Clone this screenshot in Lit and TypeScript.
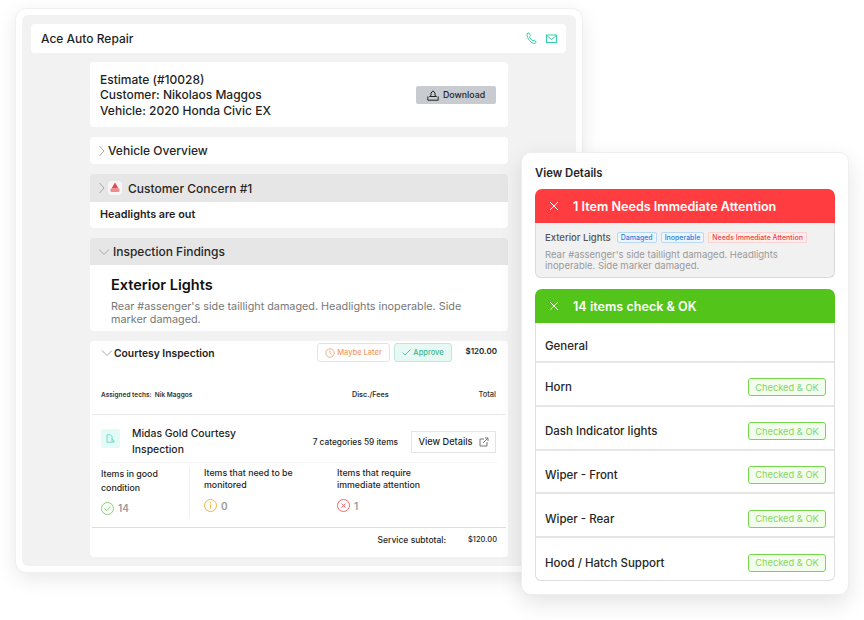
import { LitElement, html, css } from "lit";
import { customElement } from "lit/decorators.js";

const chevR = html`<svg class="chev" width="8" height="12" viewBox="0 0 8 12" fill="none" stroke="#a8a8a8" stroke-width="1"><path d="M1.500 1l4.500 5-4.500 5"/></svg>`;
const chevD = html`<svg class="chevd" width="12" height="8" viewBox="0 0 12 8" fill="none" stroke="#a8a8a8" stroke-width="1"><path d="M1 1.500l5 5 5-5"/></svg>`;
const xIcon = html`<svg class="x" width="10" height="10" viewBox="0 0 10 10" fill="none" stroke="#fff" stroke-width="1"><path d="M1 1l8 8M9 1l-8 8"/></svg>`;

const rows = ["Horn", "Dash Indicator lights", "Wiper - Front", "Wiper - Rear", "Hood / Hatch Support"];

@customElement("app-root")
export class AppRoot extends LitElement {
  static styles = css`
    :host { display: block; width: 864px; height: 620px; position: relative; overflow: hidden; background: #fff;
      font-family: Inter, "Noto Sans", sans-serif; color: #1f1f1f; }
    * { box-sizing: border-box; }
    .stage { padding: 8px 0 0 15px; }
    .outer { width: 568px; height: 565px; padding: 6px; background: #fff; border-radius: 11px;
      border: 1px solid #f0f0f0; box-shadow: 0 6px 20px rgba(0,0,0,.09); }
    .inner { height: 100%; background: #f2f2f2; border-radius: 6px; padding: 9px 10px 0 9px; }
    .top { height: 29px; background: #fff; border-radius: 4px; display: flex; align-items: center; justify-content: space-between;
      padding: 0 9px 0 10px; font-size: 12px; font-weight: 500; }
    .top .ic { display: flex; gap: 8px; align-items: center; }
    .col { width: 418px; margin: 9px 0 0 59px; display: flex; flex-direction: column; gap: 10px; }
    .est { height: 65px; background: #fff; border-radius: 4px; display: flex; align-items: center; justify-content: space-between;
      padding: 1px 12px 0 10px; font-size: 12px; line-height: 15.5px; font-weight: 500; }
    .dl { width: 80px; height: 18px; background: #c8ccd0; border-radius: 2px; display: flex; align-items: center; justify-content: center;
      gap: 4px; font-size: 8.800px; font-weight: 500; }
    .acc { height: 27px; background: #fff; border-radius: 4px; display: flex; align-items: center; font-size: 12px; font-weight: 500; padding: 0 0 0 8px; color: #262626; }
    .acc.gray { background: #e6e6e6; border-radius: 4px 4px 0 0; height: 28px; }
    .acc.short { height: 27px; }
    .acc .chev { margin-right: 2px; }
    .acc .chevd { margin-right: 3px; }
    .badge { width: 14px; height: 14px; margin-right: 6px; }
    .group { display: flex; flex-direction: column; }
    .body1 { height: 26px; background: #fff; border-radius: 0 0 4px 4px; padding: 6px 10px; font-size: 10.800px; font-weight: 600; line-height: 14px; }
    .body2 { height: 66px; background: #fff; border-radius: 0 0 4px 4px; padding: 11px 21px; }
    .body2 h3 { margin: 0; font-size: 14.500px; line-height: 18px; font-weight: 600; color: #111; }
    .body2 p { margin: 6px 0 0; font-size: 10.800px; line-height: 13px; color: #777; }
    .court { height: 216px; background: #fff; border-radius: 4px; display: flex; flex-direction: column; }
    .c-head { height: 34px; display: flex; align-items: flex-start; padding: 2px 11px 0 11px; }
    .c-title { display: flex; align-items: center; gap: 1px; font-size: 10.300px; font-weight: 600; margin-top: 4px; flex: 1; }
    .pill { height: 19px; border-radius: 3px; display: flex; align-items: center; justify-content: center; font-size: 7.500px; font-weight: 500; gap: 2px; }
    .later { width: 73px; border: 1px solid #f6ddd0; color: #ef9b6c; margin-right: 4px; }
    .appr { width: 58px; border: 1px solid #bce8dc; background: #e8f8f4; color: #3fb893; }
    .price { width: 45px; text-align: right; font-size: 8px; font-weight: 600; line-height: 16px; }
    .techs { height: 39px; display: flex; align-items: center; font-size: 6.500px; font-weight: 600; padding: 0 12px 0 11px; color: #333; }
    .techs .a { width: 251px; }
    .techs .b { font-size: 7.200px; }
    .techs .c { margin-left: auto; font-size: 7.500px; font-weight: 500; }
    .svc { margin: 0 3px 0 2px; border-top: 1px solid #e8e8e8; height: 48px; display: flex; align-items: center; padding: 6px 9px 0 9px; }
    .doc { width: 19px; height: 19px; background: #e3faf7; border-radius: 2px; display: flex; align-items: center; justify-content: center; margin: -6px 12px 0 0; }
    .svc .name { width: 130px; font-size: 10.400px; line-height: 16px; font-weight: 500; }
    .svc .cnt { margin-left: auto; margin-right: 13px; font-size: 8.300px; font-weight: 500; }
    .vd { width: 85px; height: 22px; border: 1px solid #e4e4e4; display: flex; align-items: center; justify-content: center; gap: 6px; font-size: 9.200px; font-weight: 500; }
    .stats { margin: 0 0 0 11px; border-top: 1px solid #f5f5f5; height: 65px; display: flex; width: 396px; }
    .st { font-size: 8.800px; font-weight: 500; position: relative; }
    .st .v { display: flex; align-items: center; gap: 4px; color: #9a9a9a; font-size: 10px; font-weight: 600; }
    .s1 { width: 89px; border-right: 1px solid #f0f0f0; height: 50px; margin-top: 4px; line-height: 14px; }
    .s1 .v { margin-top: 6px; }
    .s2 { width: 147px; padding: 4px 0 0 14px; line-height: 12px; }
    .s2 .v { margin-top: 8px; }
    .s3 { padding-top: 4px; line-height: 12px; }
    .s3 .v { margin-top: 8px; }
    .sub { margin: 0 2px; border-top: 1px solid #dedede; display: flex; justify-content: flex-end; align-items: center; height: 24px; padding: 0 9px 0 0; font-size: 8.500px; font-weight: 500; }
    .sub span:last-child { width: 51px; text-align: right; font-size: 7.500px; }
    .panel { position: absolute; left: 521px; top: 152px; width: 328px; height: 443px; background: #fff; border-radius: 10px; border: 1px solid #efefef;
      box-shadow: 0 8px 22px rgba(0,0,0,.11); padding: 13px 13px 0 13px; }
    .panel h4 { margin: 0; font-size: 11.300px; font-weight: 600; line-height: 14px; color: #262626; height: 23px; }
    .bar { height: 34px; display: flex; align-items: center; color: #fff; font-size: 12.600px; font-weight: 600; padding-left: 14px; gap: 14px; border-radius: 7px 7px 0 0; }
    .red { background: #ff3d41; }
    .green { background: #52c41a; }
    .box { background: #f1f1f1; border: 1px solid #d9d9d9; border-top: 0; height: 55px; border-radius: 0 0 6px 6px; padding: 8px 9px; margin-bottom: 11px; }
    .tags { display: flex; align-items: center; font-size: 9.500px; font-weight: 500; color: #555; height: 12px; }
    .tag { font-size: 7px; height: 11px; display: flex; align-items: center; padding: 0 3px; margin-left: 4px; border: 1px solid #b9d8f6; border-radius: 2px; color: #2f7fdc; background: #eef6fd; }
    .tags .first { margin-left: 6px; }
    .tag.danger { border: 1px solid #fcd3d3; color: #ef4444; background: #fdeeee; border-radius: 0; }
    .box p { margin: 6px 0 0; font-size: 9.500px; line-height: 11px; color: #999; }
    .list { border: 1px solid #dfdfdf; border-top: 0; border-radius: 0 0 6px 6px; }
    .row { height: 43.800px; display: flex; align-items: center; justify-content: space-between; padding: 7px 8px 0 9px; font-size: 11.500px; font-weight: 500; color: #262626; border-top: 2px solid #e6e6e6; }
    .row.gen { height: 38px; border-top: 0; padding-top: 8px; }
    .ok { width: 78px; height: 18px; border: 1px solid #74d84a; border-radius: 3px; background: #f3fdee; color: #85d662; font-size: 9.300px; font-weight: 400; display: flex; align-items: center; justify-content: center; }
  `;

  render() {
    return html`
      <div class="stage">
        <div class="outer">
          <div class="inner">
            <div class="top">
              <span>Ace Auto Repair</span>
              <span class="ic">
                <svg width="12" height="13" viewBox="0 0 12 13" fill="none" stroke="#35d0a8" stroke-width="1"><path d="M1 1.800L2.800.8l1.700 2.600-1 1c.5 1.800 1.900 3.700 3.400 4.500l1.300-.8 2.100 2.100-1.500 1.300C5.500 12 .8 6.500 1 1.800z"/></svg>
                <svg width="11" height="10" viewBox="0 0 11 10" fill="none" stroke="#35d0a8" stroke-width="1"><rect x=".5" y="1" width="10" height="7.500"/><path d="M.5 1.500L5.500 5.500 10.500 1.500"/></svg>
              </span>
            </div>
            <div class="col">
              <div class="est">
                <div>Estimate (#10028)<br />Customer: Nikolaos Maggos<br />Vehicle: 2020 Honda Civic EX</div>
                <div class="dl">
                  <svg width="12" height="11" viewBox="0 0 12 11" fill="none" stroke="#222" stroke-width="1"><path d="M6 .8L8 3v2.500l1.500 1H2.500L4 5.500V3zM.8 6.500v3.700h10.400V6.500"/></svg>
                  Download
                </div>
              </div>
              <div class="acc">${chevR}Vehicle Overview</div>
              <div class="group">
                <div class="acc gray">${chevR}
                  <svg class="badge" viewBox="0 0 14 14"><rect width="14" height="14" rx="4" fill="#f6f6f6"/><path d="M7 1.500l3.500 6h-7z" fill="#e5484d"/><rect x="2.500" y="7.500" width="9" height="3.500" rx="1" fill="#f08a8d"/></svg>
                  Customer Concern #1</div>
                <div class="body1">Headlights are out</div>
              </div>
              <div class="group">
                <div class="acc gray short">${chevD}Inspection Findings</div>
                <div class="body2">
                  <h3>Exterior Lights</h3>
                  <p>Rear #assenger's side taillight damaged. Headlights inoperable. Side marker damaged.</p>
                </div>
              </div>
              <div class="court">
                <div class="c-head">
                  <div class="c-title">${chevD}Courtesy Inspection</div>
                  <div class="pill later">
                    <svg width="10" height="10" viewBox="0 0 10 10" fill="none" stroke="#ef9b6c" stroke-width=".8"><circle cx="5" cy="5" r="4.200"/><path d="M5 2.500V5.500l1.500 1"/></svg>
                    Maybe Later
                  </div>
                  <div class="pill appr">
                    <svg width="9" height="7" viewBox="0 0 9 7" fill="none" stroke="#3fb893" stroke-width=".8"><path d="M.5 3.500L3 6l5.500-5.500"/></svg>
                    Approve
                  </div>
                  <div class="price">$120.00</div>
                </div>
                <div class="techs">
                  <span class="a">Assigned techs:&nbsp; Nik Maggos</span>
                  <span class="b">Disc./Fees</span>
                  <span class="c">Total</span>
                </div>
                <div class="svc">
                  <div class="doc">
                    <svg width="9" height="9" viewBox="0 0 9 9" fill="none" stroke="#4fd8c4" stroke-width=".8"><path d="M1 .8h3.500L6 2.300v5.900H1zM6 4.500l2.500 3.500H6"/></svg>
                  </div>
                  <div class="name">Midas Gold Courtesy Inspection</div>
                  <div class="cnt">7 categories 59 items</div>
                  <div class="vd">View Details
                    <svg width="10" height="10" viewBox="0 0 10 10" fill="none" stroke="#777" stroke-width="1"><path d="M5 2H1v7h7V5M4 6l5-5M6 1h3v3"/></svg>
                  </div>
                </div>
                <div class="stats">
                  <div class="st s1">Items in good<br />condition
                    <div class="v">
                      <svg width="13" height="13" viewBox="0 0 13 13" fill="none" stroke="#7ed56a" stroke-width="1"><circle cx="6.500" cy="6.500" r="6"/><path d="M3.500 6.500l2.200 2.200 4-4.200"/></svg>14
                    </div>
                  </div>
                  <div class="st s2">Items that need to be<br />monitored
                    <div class="v">
                      <svg width="13" height="13" viewBox="0 0 13 13" fill="none" stroke="#fbb03b" stroke-width="1"><circle cx="6.500" cy="6.500" r="6"/><path d="M6.500 5.500v4M6.500 3.200v1.200"/></svg>0
                    </div>
                  </div>
                  <div class="st s3">Items that require<br />immediate attention
                    <div class="v">
                      <svg width="13" height="13" viewBox="0 0 13 13" fill="none" stroke="#f26a6a" stroke-width="1"><circle cx="6.500" cy="6.500" r="6"/><path d="M4.500 4.500l4 4M8.500 4.500l-4 4"/></svg>1
                    </div>
                  </div>
                </div>
                <div class="sub"><span>Service subtotal:</span><span>$120.00</span></div>
              </div>
            </div>
          </div>
        </div>
      </div>
      <div class="panel">
        <h4>View Details</h4>
        <div class="bar red">${xIcon}1 Item Needs Immediate Attention</div>
        <div class="box">
          <div class="tags">Exterior Lights
            <span class="tag first">Damaged</span><span class="tag">Inoperable</span><span class="tag danger">Needs Immediate Attention</span>
          </div>
          <p>Rear #assenger's side taillight damaged. Headlights<br />inoperable. Side marker damaged.</p>
        </div>
        <div class="bar green">${xIcon}14 items check &amp; OK</div>
        <div class="list">
          <div class="row gen">General</div>
          ${rows.map((r) => html`<div class="row">${r}<span class="ok">Checked &amp; OK</span></div>`)}
        </div>
      </div>
    `;
  }
}
